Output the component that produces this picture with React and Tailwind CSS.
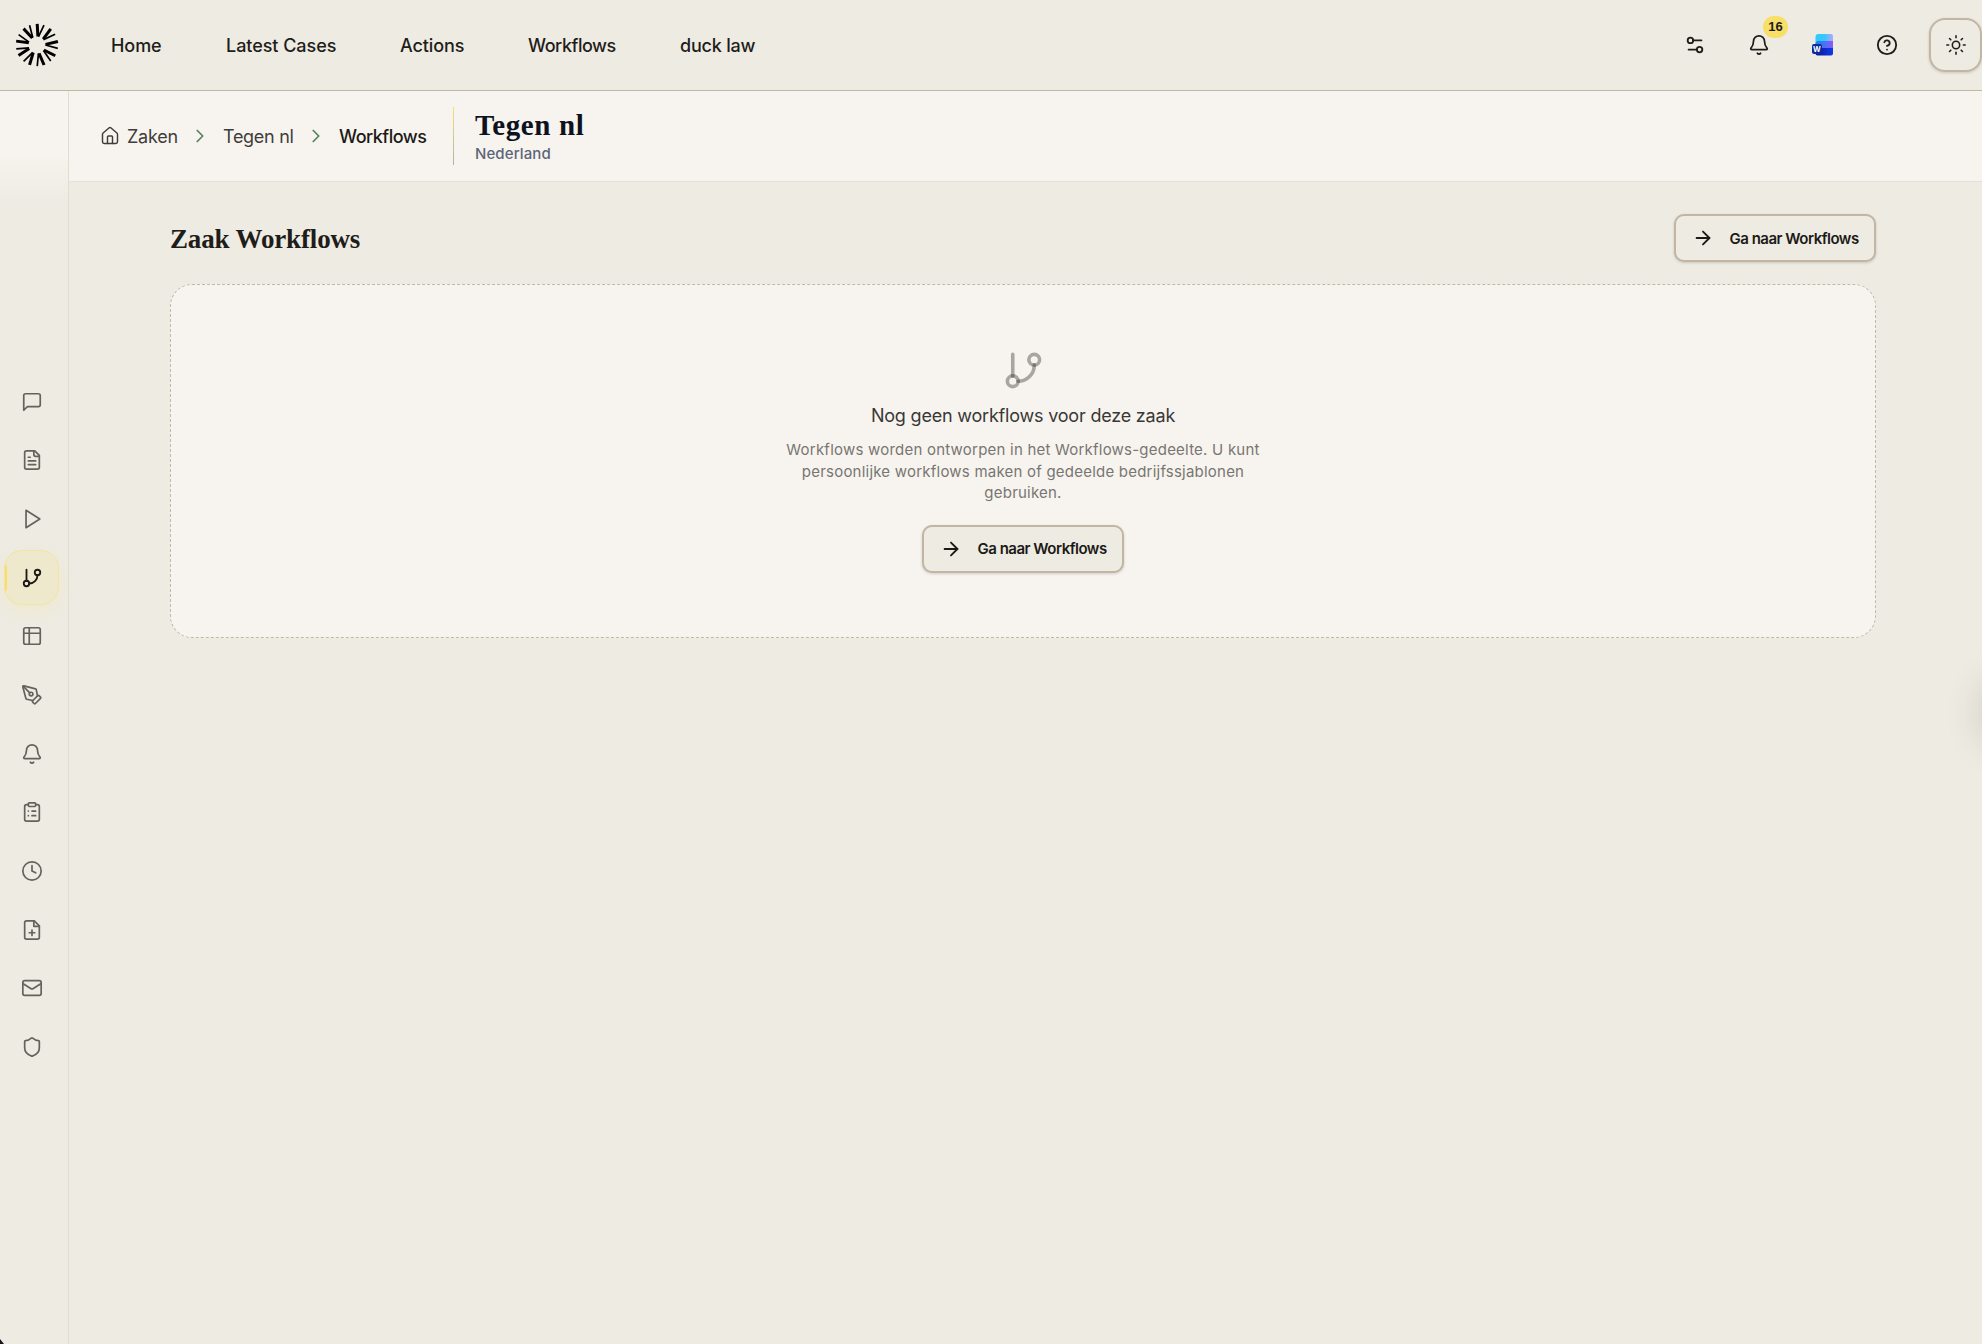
import React from 'react';
import {
  ArrowRight,
  Bell,
  ChevronRight,
  CircleHelp,
  ClipboardList,
  Clock,
  GitBranch,
  House,
  Mail,
  PenTool,
  Settings2,
  Shield,
  Sun,
} from 'lucide-react';

const navItems = [
  { label: 'Home', className: 'w-[51px] tracking-[-0.05px]' },
  { label: 'Latest Cases', className: 'w-[110px] tracking-[-0.05px]' },
  { label: 'Actions', className: 'w-[64px] tracking-[-0.1px]' },
  { label: 'Workflows', className: 'w-[88px] tracking-[-0.45px]' },
  { label: 'duck law', className: 'w-[76px] tracking-[-0.2px]' },
];

function Outline({ size, strokeWidth, children }) {
  return (
    <svg width={size} height={size} viewBox="0 0 24 24" fill="none" stroke="currentColor" strokeWidth={strokeWidth} strokeLinecap="round" strokeLinejoin="round">
      {children}
    </svg>
  );
}

function TableIcon(props) {
  return (
    <Outline {...props}>
      <rect x="3" y="3" width="18" height="18" rx="2" />
      <path d="M3 9h18M9 3v18" />
    </Outline>
  );
}

function MessageIcon(props) {
  return (
    <Outline {...props}>
      <path d="M21 15a2 2 0 0 1-2 2H7l-4 4V5a2 2 0 0 1 2-2h14a2 2 0 0 1 2 2z" />
    </Outline>
  );
}

function FileTextIcon(props) {
  return (
    <Outline {...props}>
      <path d="M15 2H6a2 2 0 0 0-2 2v16a2 2 0 0 0 2 2h12a2 2 0 0 0 2-2V7Z" />
      <path d="M14 2v4a2 2 0 0 0 2 2h4M10 9H8M16 13H8M16 17H8" />
    </Outline>
  );
}

function FilePlusIcon(props) {
  return (
    <Outline {...props}>
      <path d="M14.500 2H6a2 2 0 0 0-2 2v16a2 2 0 0 0 2 2h12a2 2 0 0 0 2-2V7.500L14.500 2z" />
      <path d="M14 2v6h6M12 18v-6M9 15h6" />
    </Outline>
  );
}

function PlayIcon(props) {
  return (
    <Outline {...props}>
      <path d="M5.500 2.500l15 9.500-15 9.500z" />
    </Outline>
  );
}

const sidebarItems = [
  { id: 'chat', icon: MessageIcon },
  { id: 'documents', icon: FileTextIcon },
  { id: 'run', icon: PlayIcon },
  { id: 'workflows', icon: GitBranch, active: true },
  { id: 'table', icon: TableIcon },
  { id: 'draft', icon: PenTool },
  { id: 'alerts', icon: Bell },
  { id: 'tasks', icon: ClipboardList },
  { id: 'history', icon: Clock },
  { id: 'new-file', icon: FilePlusIcon },
  { id: 'mail', icon: Mail },
  { id: 'security', icon: Shield },
];

function Logo() {
  return (
    <svg width="44" height="44" viewBox="-22 -22 44 44" fill="none" stroke="#000" strokeLinejoin="round">
      {[0, 40, 80, 120, 160, 200, 240, 280, 320].map((angle) => (
        <g key={angle} transform={`rotate(${angle})`}>
          <path d="M0.200 -21.200L0.900 -8.500" strokeWidth="3" />
          <path d="M1.500 -8.300L7 -19.900" strokeWidth="1.700" />
        </g>
      ))}
    </svg>
  );
}

function WordIcon() {
  return (
    <svg width="22" height="22" viewBox="0 0 22 22">
      <defs>
        <linearGradient id="wordTop" x1="0" y1="0" x2="1" y2="0">
          <stop offset="0.500" stopColor="#33c9fb" />
          <stop offset="1" stopColor="#b5a6ff" />
        </linearGradient>
        <linearGradient id="wordMid" x1="0" y1="0" x2="1" y2="0">
          <stop offset="0.200" stopColor="#2080f4" />
          <stop offset="1" stopColor="#8a5cf5" />
        </linearGradient>
        <linearGradient id="wordBottom" x1="0" y1="0" x2="1" y2="0">
          <stop offset="0.200" stopColor="#0a1fa8" />
          <stop offset="1" stopColor="#1238ef" />
        </linearGradient>
      </defs>
      <path d="M6.500 0h12.500A2 2 0 0 1 21 2v8H3.500V3a3 3 0 0 1 3-3z" fill="url(#wordTop)" />
      <path d="M6.500 7H21v8H3.500v-5a3 3 0 0 1 3-3z" fill="url(#wordMid)" />
      <path d="M6.500 14H21v5.500a2 2 0 0 1-2 2H5.500a2 2 0 0 1-2-2V17a3 3 0 0 1 3-3z" fill="url(#wordBottom)" />
      <rect x="0" y="10" width="10" height="10" rx="2" fill="#0d2b9c" />
      <text x="5" y="17.800" textAnchor="middle" fontSize="7.500" fontWeight="700" fontFamily="Inter, sans-serif" fill="#fff">W</text>
    </svg>
  );
}

function WorkflowButton() {
  return (
    <button className="flex h-12 w-[202px] shrink-0 items-center rounded-[10px] border-2 border-[#c2b5a1] bg-[#eeebe3] pl-[15.500px] text-[#1c1a17] shadow-[0_1px_3px_rgba(0,0,0,0.16)]">
      <ArrowRight size={22} strokeWidth={2} />
      <span className="ml-4 pt-px text-[15px] leading-5 font-semibold tracking-[-0.5px] whitespace-nowrap">Ga naar Workflows</span>
    </button>
  );
}

function Header() {
  return (
    <header className="flex h-[91px] shrink-0 items-center border-b border-[#c2b5a1] bg-[#eeebe3]">
      <div className="ml-[14.500px]">
        <Logo />
      </div>
      <nav className="ml-[52.500px] flex gap-16 pt-px text-[18px] leading-6 font-medium text-[#1f1d1a]">
        {navItems.map((item) => (
          <a key={item.label} className={`whitespace-nowrap ${item.className}`}>{item.label}</a>
        ))}
      </nav>
      <div className="ml-auto flex w-[298px] shrink-0 items-center text-[#1f1d1a]">
        <Settings2 size={22} strokeWidth={2} className="shrink-0" />
        <div className="relative ml-[42px] shrink-0">
          <Bell size={22} strokeWidth={1.900} />
          <span className="absolute -top-[18px] left-[15px] flex h-[22px] w-[25px] items-center justify-center rounded-full bg-[#f8df68] font-['Liberation_Sans',sans-serif] text-[13px] font-bold">
            16
          </span>
        </div>
        <div className="ml-[42px] shrink-0">
          <WordIcon />
        </div>
        <CircleHelp size={22} strokeWidth={2} className="ml-[42px] shrink-0" />
        <button className="ml-[31px] flex h-[54px] w-[53px] shrink-0 items-center justify-center rounded-[16px] border-2 border-[#c2b5a1] shadow-[0_1px_3px_rgba(0,0,0,0.16)]">
          <Sun size={22} strokeWidth={1.700} />
        </button>
      </div>
    </header>
  );
}

function Sidebar() {
  return (
    <aside className="flex w-[69px] shrink-0 flex-col border-r border-[#e1ddd0] bg-linear-to-b from-[#f7f4ef] from-[62px] to-[#eeebe3] to-[112px] pt-[283px] pl-1">
      <div className="flex flex-col gap-[3.700px]">
        {sidebarItems.map(({ id, icon: Icon, active }) =>
          active ? (
            <button key={id} className="relative flex size-[55px] items-center justify-center rounded-[18px] border border-[#f4e4a0] bg-[#eee9cc] text-[#1c1a17] shadow-[0_6px_18px_rgba(248,223,104,0.16)]">
              <span className="absolute top-[14px] left-0 h-[26px] w-[2px] rounded-r-full bg-[#f8df68]" />
              <Icon size={22} strokeWidth={2} />
            </button>
          ) : (
            <button key={id} className="flex size-[55px] items-center justify-center text-[#65625c]">
              <Icon size={22} strokeWidth={1.850} />
            </button>
          )
        )}
      </div>
    </aside>
  );
}

function Breadcrumbs() {
  return (
    <div className="flex h-[91px] shrink-0 items-center border-b border-[#e4e1da] bg-[#f7f4ef] pl-[31px]">
      <div className="flex items-center text-[18px] leading-6 whitespace-nowrap text-[#3f3d3a]">
        <House size={20} strokeWidth={1.750} />
        <span className="ml-[7px] w-[50px] pt-px tracking-[-0.2px]">Zaken</span>
        <ChevronRight size={22} strokeWidth={1.900} className="ml-3 text-[#55825a]" />
        <span className="ml-3 w-[70px] pt-px tracking-[-0.3px]">Tegen nl</span>
        <ChevronRight size={22} strokeWidth={1.900} className="ml-3 text-[#55825a]" />
        <span className="ml-3 w-[88px] pt-px font-medium tracking-[-0.5px] text-[#1c1a17]">Workflows</span>
      </div>
      <div className="ml-[26px] h-[58px] w-px bg-linear-to-b from-[#f8df7c] to-[#a9b5a3]" />
      <div className="ml-[21px] flex flex-col pt-[3px]">
        <h1 className="font-['Liberation_Serif',serif] text-[29px] leading-8 font-bold tracking-[0.6px] whitespace-nowrap text-[#0d1220]">Tegen nl</h1>
        <p className="mt-px text-[15px] leading-6 font-medium tracking-[0.1px] text-[#5d6478]">Nederland</p>
      </div>
    </div>
  );
}

function EmptyState() {
  return (
    <section className="mt-[22px] flex h-[354px] flex-col items-center rounded-[22px] border border-dashed border-[#c2b9a4] bg-[#f7f4ef] pt-16">
      <GitBranch size={43} strokeWidth={2} color="rgba(31,29,26,0.36)" />
      <h3 className="mt-[10px] text-[18px] leading-7 tracking-[-0.2px] whitespace-nowrap text-[#3a3835]">Nog geen workflows voor deze zaak</h3>
      <p className="mt-[9px] text-center text-[15px] leading-[21.500px] tracking-[0.22px] whitespace-nowrap text-[#787672]">
        <span className="block">Workflows worden ontworpen in het Workflows-gedeelte. U kunt</span>
        <span className="block">persoonlijke workflows maken of gedeelde bedrijfssjablonen</span>
        <span className="block">gebruiken.</span>
      </p>
      <div className="mt-[21px]">
        <WorkflowButton />
      </div>
    </section>
  );
}

export default function App() {
  return (
    <div className="relative flex h-[1344px] w-[1982px] flex-col overflow-hidden bg-[#eeebe3] font-[Inter,sans-serif]">
      <Header />
      <div className="flex min-h-0 flex-1">
        <Sidebar />
        <div className="flex min-w-0 flex-1 flex-col">
          <Breadcrumbs />
          <main className="flex flex-col pt-8 pr-[106px] pl-[101px]">
            <div className="flex items-center justify-between">
              <h2 className="pt-px font-['Liberation_Serif',serif] text-[27px] leading-9 font-bold tracking-[-0.15px] whitespace-nowrap text-[#1f1d1a]">Zaak Workflows</h2>
              <WorkflowButton />
            </div>
            <EmptyState />
          </main>
        </div>
      </div>

      {/* soft shadow from the collapsed side panel, and the window corner */}
      <div className="absolute top-[685px] left-[1988px] h-[56px] w-10 rounded-full shadow-[0_0_36px_6px_rgba(60,55,45,0.18)]" />
      <div className="absolute bottom-0 left-0 h-[5px] w-1 bg-[#15171c] [clip-path:polygon(0_0,100%_100%,0_100%)]" />
    </div>
  );
}
